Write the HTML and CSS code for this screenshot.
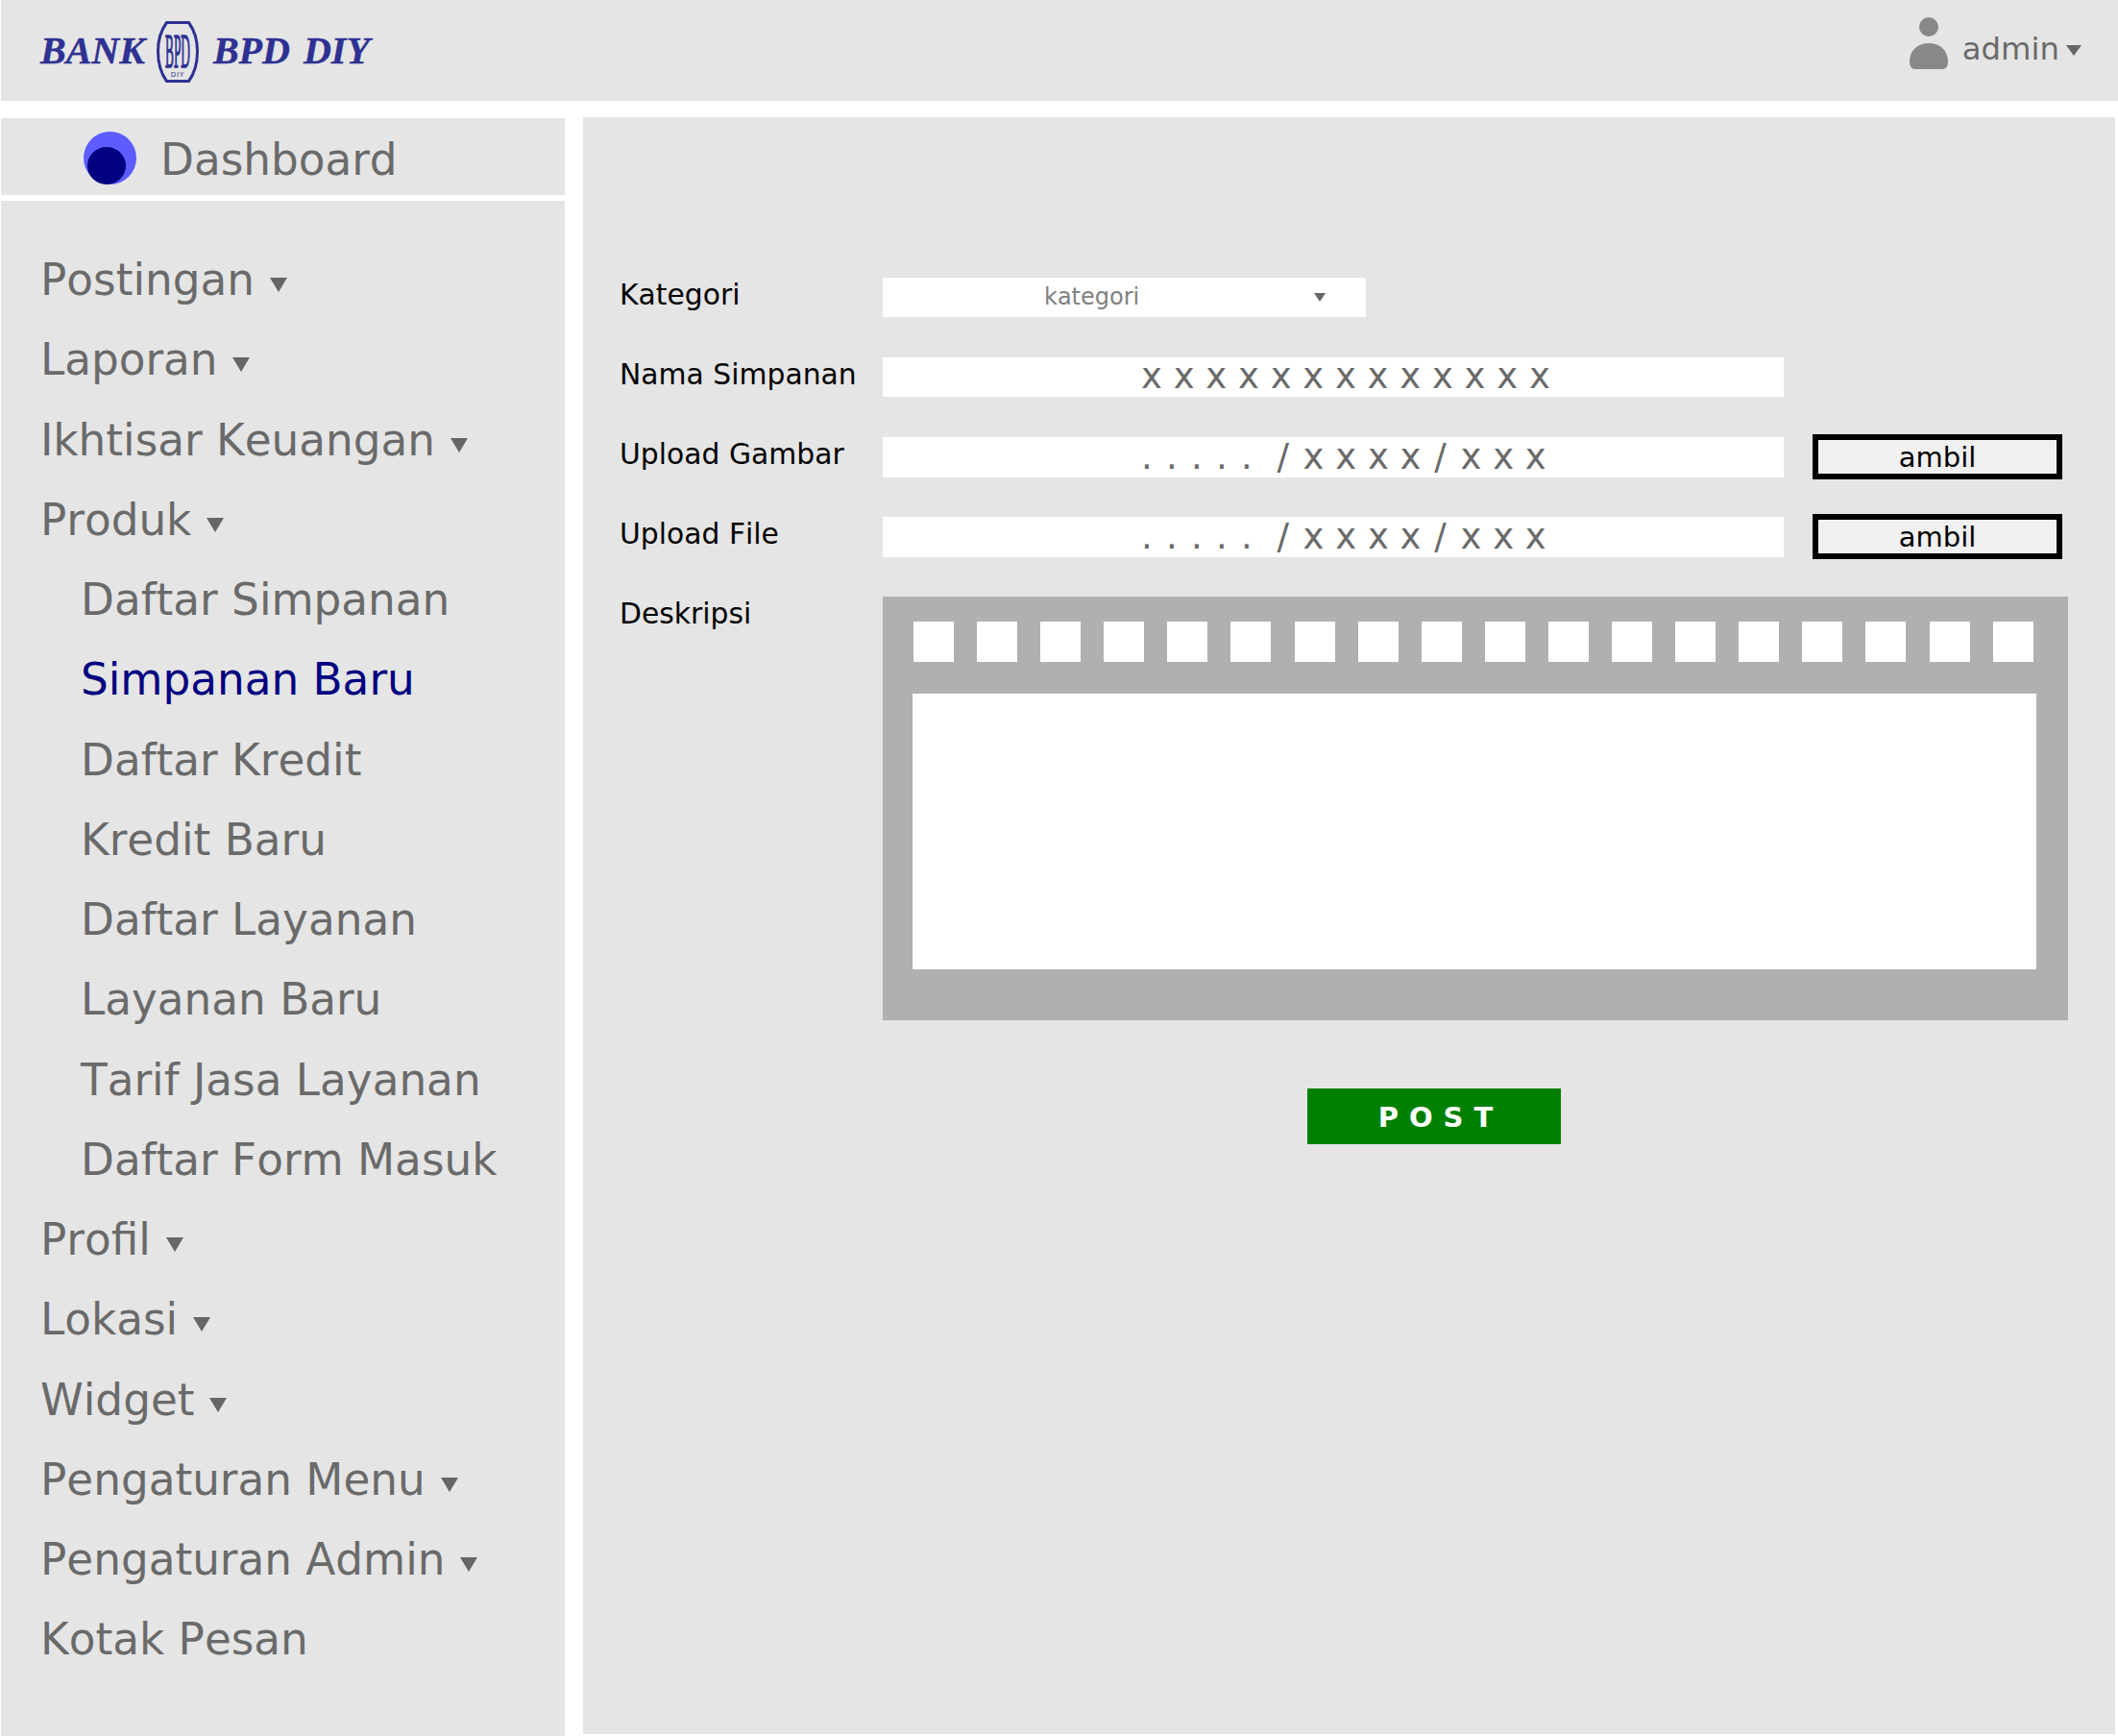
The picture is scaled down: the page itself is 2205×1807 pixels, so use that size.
FILE: index.html
```html
<!DOCTYPE html>
<html>
<head>
  <title>Simpanan Baru</title>
  <link rel="stylesheet" href="styles.css">
</head>

<body>
  <header class="topbar">
    <div class="logo">
      <span>BANK</span>
      <svg class="logo-mark" width="44" height="64" viewBox="0 0 44 64">
        <path d="M10.500 1.500 H33.500 C39 9 42.500 20 42.500 31.500 C42.500 43 39 55 33.500 62.500 H10.500 C5 55 1.500 43 1.500 31.500 C1.500 20 5 9 10.500 1.500 Z" fill="none" stroke="#2e3192" stroke-width="3"/>
        <text class="logo-mark-bpd" transform="translate(9 48) scale(.267 1)">BPD</text>
        <text class="logo-mark-diy" x="22" y="58" text-anchor="middle">DIY</text>
      </svg>
      <span class="logo-name">BPD DIY</span>
    </div>
    <div class="user">
      <svg width="40" height="54" viewBox="0 0 40 54">
        <circle cx="20" cy="10" r="10" fill="#888"/>
        <path d="M0 46 C0 34 9 27 20 27 C31 27 40 34 40 46 C40 51 38 54 34 54 H6 C2 54 0 51 0 46 Z" fill="#888"/>
      </svg>
      <span class="user-name">admin</span>
      <span class="user-caret"></span>
    </div>
  </header>

  <div class="layout">
    <aside class="side">
      <div class="dash">
        <svg width="55" height="55" viewBox="0 0 55 55">
          <circle cx="27.500" cy="27.500" r="27.500" fill="#5c5cff"/>
          <ellipse cx="24" cy="35.500" rx="20" ry="19.500" fill="#000080"/>
        </svg>
        <span>Dashboard</span>
      </div>
      <nav class="menu">
        <a>Postingan <i class="caret"></i></a>
        <a>Laporan <i class="caret"></i></a>
        <a>Ikhtisar Keuangan <i class="caret"></i></a>
        <a>Produk <i class="caret"></i></a>
        <a class="sub">Daftar Simpanan</a>
        <a class="sub active">Simpanan Baru</a>
        <a class="sub">Daftar Kredit</a>
        <a class="sub">Kredit Baru</a>
        <a class="sub">Daftar Layanan</a>
        <a class="sub">Layanan Baru</a>
        <a class="sub">Tarif Jasa Layanan</a>
        <a class="sub">Daftar Form Masuk</a>
        <a>Profil <i class="caret"></i></a>
        <a>Lokasi <i class="caret"></i></a>
        <a>Widget <i class="caret"></i></a>
        <a>Pengaturan Menu <i class="caret"></i></a>
        <a>Pengaturan Admin <i class="caret"></i></a>
        <a>Kotak Pesan</a>
      </nav>
    </aside>

    <main class="main">
      <form class="form">
        <div class="row">
          <label>Kategori</label>
          <div class="select"><span>kategori</span><i class="select-caret"></i></div>
        </div>
        <div class="row">
          <label>Nama Simpanan</label>
          <div class="field">x x x x x x x x x x x x x</div>
        </div>
        <div class="row">
          <label>Upload Gambar</label>
          <div class="field field-path"><span class="dots">. . . . .</span>  <span class="sep">/</span> x x x x <span class="sep">/</span> x x x</div>
          <button class="pick" type="button">ambil</button>
        </div>
        <div class="row">
          <label>Upload File</label>
          <div class="field field-path"><span class="dots">. . . . .</span>  <span class="sep">/</span> x x x x <span class="sep">/</span> x x x</div>
          <button class="pick" type="button">ambil</button>
        </div>
        <div class="row row-editor">
          <label>Deskripsi</label>
          <div class="editor">
            <div class="tools">
              <span></span><span></span><span></span><span></span><span></span><span></span>
              <span></span><span></span><span></span><span></span><span></span><span></span>
              <span></span><span></span><span></span><span></span><span></span><span></span>
            </div>
            <textarea class="text"></textarea>
          </div>
        </div>
        <button class="post" type="submit">POST</button>
      </form>
    </main>
  </div>
</body>

</html>
```

FILE: styles.css
```css
body {
  margin: 0;
  background-color: #fff;
  color: #6a6a6a;
  font-family: "DejaVu Sans", sans-serif;
  font-kerning: none;
}

.topbar {
  display: flex;
  justify-content: space-between;
  height: 105px;
  margin-left: 1px;
  background-color: #e5e5e5;
}

.logo {
  display: flex;
  align-items: center;
  padding-left: 41px;
  color: #2e3192;
  font-family: "Liberation Serif", serif;
  font-kerning: normal;
  font-size: 40px;
  font-style: italic;
  font-weight: bold;
  -webkit-text-stroke: 0.400px #2e3192;
}

.logo-name {
  word-spacing: 4px;
}

.logo-mark {
  margin: 3px 15px 0 12px;
  overflow: visible;
}

.logo-mark-bpd {
  fill: #2e3192;
  stroke: #2e3192;
  stroke-width: 1.500px;
  font-size: 50px;
  font-style: normal;
  font-weight: normal;
}

.logo-mark-diy {
  fill: #2e3192;
  font-family: "DejaVu Sans", sans-serif;
  font-size: 7px;
  font-style: normal;
  font-weight: normal;
  letter-spacing: 1px;
  -webkit-text-stroke: 0;
}

.user {
  display: flex;
  align-items: flex-start;
  padding: 18px 38px 0 0;
}

.user-name {
  margin: 14px 7px 0 15px;
  font-size: 32.300px;
}

.user-caret {
  margin-top: 29px;
  border-top: 11px solid #666;
  border-left: 8px solid transparent;
  border-right: 8px solid transparent;
}

.layout {
  display: flex;
  align-items: stretch;
  height: 1702px;
}

.side {
  display: flex;
  flex-direction: column;
  width: 587px;
  margin-left: 1px;
  padding-top: 18px;
}

.dash {
  display: flex;
  align-items: center;
  gap: 25px;
  height: 80px;
  padding-left: 86px;
  background-color: #e5e5e5;
  font-size: 45.300px;
}

.dash svg {
  margin-top: 3px;
}

.dash span {
  margin-top: 6px;
}

.menu {
  flex: 1;
  display: flex;
  flex-direction: column;
  margin-top: 6px;
  padding-top: 41px;
  background-color: #e5e5e5;
}

.menu a {
  display: block;
  height: 83.250px;
  line-height: 83.250px;
  padding-left: 41px;
  font-size: 45.300px;
  white-space: nowrap;
}

.menu a.sub {
  padding-left: 83px;
}

.menu a.active {
  color: #000080;
}

.caret {
  display: inline-block;
  margin-left: 1.500px;
  vertical-align: 3px;
  border-top: 15px solid #666;
  border-left: 9.500px solid transparent;
  border-right: 9.500px solid transparent;
}

.main {
  width: 1595px;
  margin: 17px 0 2px 19px;
  background-color: #e5e5e5;
}

.form {
  padding: 167px 0 0 38px;
}

.row {
  display: flex;
  align-items: center;
  height: 41px;
  margin-bottom: 42px;
}

.row label {
  width: 274px;
  margin-top: -6px;
  color: #000;
  font-size: 29.800px;
  white-space: nowrap;
}

.select {
  display: flex;
  align-items: center;
  width: 503px;
  height: 41px;
  padding-left: 168px;
  box-sizing: border-box;
  background-color: #fff;
  color: #808080;
  font-size: 24px;
}

.select span {
  margin-top: -2px;
}

.select-caret {
  margin-left: 182px;
  border-top: 9px solid #666;
  border-left: 6px solid transparent;
  border-right: 6px solid transparent;
}

.field {
  width: 938px;
  height: 41px;
  line-height: 40px;
  padding-left: 269px;
  box-sizing: border-box;
  background-color: #fff;
  font-size: 37px;
  white-space: pre;
}

.field-path {
  height: 42px;
  line-height: 41px;
  align-self: flex-start;
}

.dots {
  word-spacing: 2.500px;
}

.sep {
  margin: 0 3px 0 2px;
}

.pick {
  width: 260px;
  height: 47px;
  margin-left: 30px;
  box-sizing: border-box;
  border: 6px solid #000;
  border-radius: 0;
  background-color: #f0f0f0;
  color: #000;
  font-family: "DejaVu Sans", sans-serif;
  font-size: 29px;
}

.row-editor {
  align-items: flex-start;
  height: 441px;
  margin-bottom: 71px;
}

.row-editor label {
  margin-top: 0;
}

.editor {
  width: 1234px;
  height: 441px;
  padding: 26px 30px 0 32px;
  box-sizing: border-box;
  background-color: #b0b0b0;
}

.tools {
  display: flex;
  gap: 24.100px;
  height: 42px;
}

.tools span {
  width: 42px;
  background-color: #fff;
}

.text {
  display: block;
  width: 1170px;
  height: 287px;
  margin: 33px 0 0 -1px;
  padding: 0;
  border: 0;
  border-radius: 0;
  outline: 0;
  resize: none;
  background-color: #fff;
}

.post {
  display: block;
  width: 264px;
  height: 58px;
  margin-left: 716px;
  padding: 2px 0 0 14px;
  border: 0;
  background-color: #008000;
  color: #fff;
  font-family: "DejaVu Sans", sans-serif;
  font-size: 29px;
  font-weight: bold;
  letter-spacing: 11px;
}
```
